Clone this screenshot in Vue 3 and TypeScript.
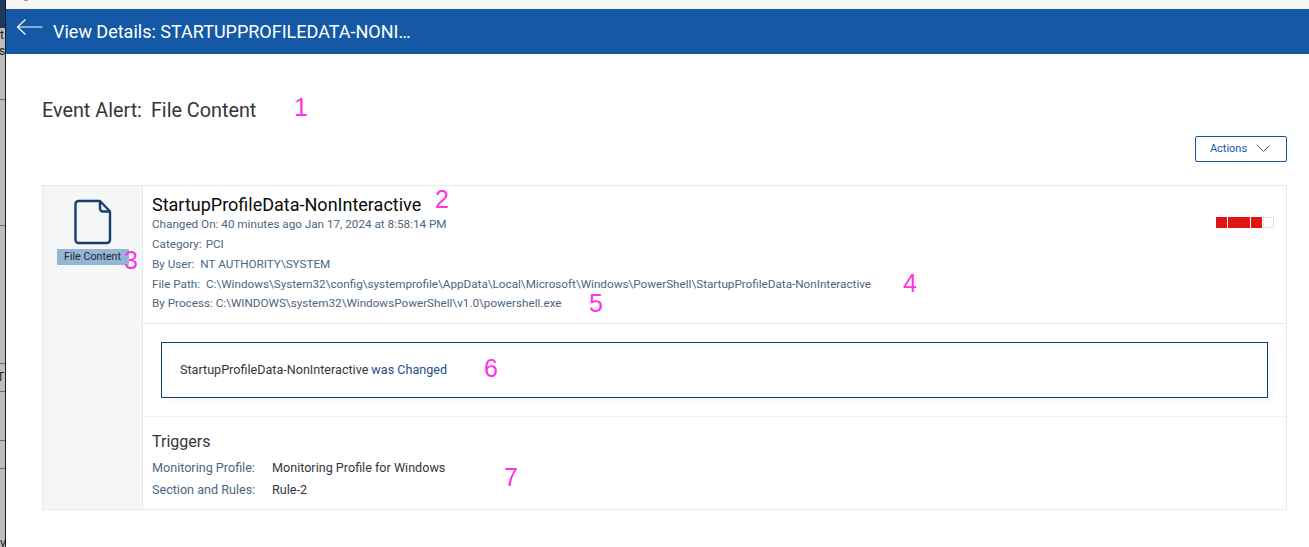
<script setup lang="ts">
interface Row { label: string; value: string; gap: number }
const meta: Row[] = [
  { label: 'Category:', value: 'PCI', gap: 4 },
  { label: 'By User:', value: 'NT AUTHORITY\\SYSTEM', gap: 6 },
  { label: 'File Path:', value: 'C:\\Windows\\System32\\config\\systemprofile\\AppData\\Local\\Microsoft\\Windows\\PowerShell\\StartupProfileData-NonInteractive', gap: 6 },
]
</script>

<template>
  <div class="page">
    <aside class="backdrop">
      <span class="bd-navy"></span>
      <span class="bd-line l1"></span>
      <span class="bd-text t1">t</span>
      <span class="bd-text t2">s</span>
      <span class="bd-line l2"></span>
      <span class="bd-line l3"></span>
      <span class="bd-text t3">T</span>
      <span class="bd-line l4"></span>
      <span class="bd-line l5"></span>
      <span class="bd-line l6"></span>
      <span class="bd-text t4">v</span>
    </aside>
    <main class="drawer">
      <div class="topstrip"><i class="red-mark"></i></div>
      <header class="bar">
        <svg class="back" width="28" height="18" viewBox="0 0 28 18" fill="none" stroke="#fff" stroke-width="1.2">
          <path d="M1.500 9H26.500M9.500 1.500 1.500 9 9.500 16.500" />
        </svg>
        <span class="bar-title">View Details: STARTUPPROFILEDATA-NONI…</span>
      </header>
      <div class="content">
        <h1 class="headline"><span>Event Alert:</span><span>File Content</span></h1>
        <div class="actions-row">
          <button class="actions" type="button">
            <span>Actions</span>
            <svg width="13" height="7" viewBox="0 0 13 7" fill="none" stroke="#1558a5" stroke-width="1">
              <path d="M.5.5 6.500 6.500 12.500.5" />
            </svg>
          </button>
        </div>
        <section class="card">
          <div class="side">
            <svg class="file" width="38" height="46" viewBox="0 0 38 46" fill="none" stroke="#173f6e" stroke-width="2.4" stroke-linejoin="round">
              <path d="M4.500 2H26L36 12.500V41A3 3 0 0 1 33 44H4.500A3 3 0 0 1 1.500 41V5A3 3 0 0 1 4.500 2Z" />
              <path d="M26 2V9.500A3 3 0 0 0 29 12.500H36" />
            </svg>
            <span class="tag">File Content</span>
          </div>
          <div class="body">
            <div class="summary">
              <div class="summary-text">
                <h2 class="name">StartupProfileData-NonInteractive</h2>
                <p class="line first">Changed On: 40 minutes ago Jan 17, 2024 at 8:58:14 PM</p>
                <p v-for="r in meta" :key="r.label" class="line"><span :style="{ marginRight: r.gap + 'px' }">{{ r.label }}</span>{{ r.value }}</p>
                <p class="line process">By Process: C:\WINDOWS\system32\WindowsPowerShell\v1.0\powershell.exe</p>
              </div>
              <div class="severity">
                <i class="w11"></i><i class="w22"></i><i class="w11"></i><i class="empty"></i>
              </div>
            </div>
            <div class="message-wrap">
              <div class="message">
                <span class="dark">StartupProfileData-NonInteractive</span> <span class="blue">was Changed</span>
              </div>
            </div>
            <div class="triggers">
              <h3 class="trig-title">Triggers</h3>
              <div class="trig-row"><span class="trig-lab">Monitoring Profile:</span><span>Monitoring Profile for Windows</span></div>
              <div class="trig-row"><span class="trig-lab">Section and Rules:</span><span>Rule-2</span></div>
            </div>
          </div>
        </section>
      </div>
    </main>
    <span class="note n1">1</span>
    <span class="note n2">2</span>
    <span class="note n3">3</span>
    <span class="note n4">4</span>
    <span class="note n5">5</span>
    <span class="note n6">6</span>
    <span class="note n7">7</span>
  </div>
</template>

<style>
html, body { margin: 0; background: #fff; overflow: hidden; }
</style>

<style scoped>
.page { position: relative; width: 1309px; height: 547px; display: flex; overflow: hidden; font-family: Roboto, "Liberation Sans", sans-serif; }
.backdrop { position: relative; width: 5px; flex: none; background: #bdbdbd; }
.bd-navy { position: absolute; left: 0; top: 0; width: 5px; height: 28px; background: #1d3a63; }
.bd-line { position: absolute; left: 0; width: 5px; height: 1px; background: #5d7187; }
.l1 { top: 99px; } .l2 { top: 225px; } .l3 { top: 363px; } .l4 { top: 391px; } .l5 { top: 440px; } .l6 { top: 468px; }
.bd-text { position: absolute; font-size: 12px; color: #222; line-height: 12px; }
.t1 { top: 29px; left: 0; } .t2 { top: 45px; left: -1px; } .t3 { top: 371px; left: -3px; } .t4 { top: 537px; left: 0; }
.drawer { flex: 1; min-width: 0; display: flex; flex-direction: column; background: #fff; border-left: 1px solid #17191c; }
.topstrip { height: 9px; background: #f5f5f5; position: relative; }
.red-mark { position: absolute; left: 18px; top: 0; width: 4px; height: 1px; background: #f08080; }
.bar { height: 45px; background: #1558a5; color: #fff; display: flex; align-items: center; box-sizing: border-box; padding: 0 0 0 10px; }
.back { margin-top: -9px; flex: none; }
.bar-title { margin-left: 9px; font-size: 18px; font-weight: 400; letter-spacing: 0; }
.content { padding: 0 22px 0 36px; }
.headline { margin: 45px 0 0; font-size: 19.800px; font-weight: 400; line-height: 23px; color: #33373b; display: flex; gap: 9px; }
.actions-row { display: flex; justify-content: flex-end; margin-top: 14px; }
.actions { width: 92px; height: 26px; box-sizing: border-box; background: #fff; border: 1px solid #1558a5; border-radius: 2px; color: #1558a5; font: 400 11px Roboto, sans-serif; display: flex; align-items: center; justify-content: center; gap: 10px; padding: 0 2px 2px 0; }
.card { margin-top: 23px; height: 325px; box-sizing: border-box; border: 1px solid #e6e8ea; display: flex; }
.side { width: 99px; flex: none; background: #f4f6f8; border-right: 1px solid #e6e8ea; display: flex; flex-direction: column; align-items: center; position: relative; }
.file { margin-top: 13px; }
.tag { margin-top: 4px; width: 72px; height: 16px; background: #94b4d8; border-radius: 1px; color: #22272c; font-size: 10.700px; line-height: 15px; text-align: center; }
.body { flex: 1; min-width: 0; display: flex; flex-direction: column; }
.summary { height: 138px; box-sizing: border-box; border-bottom: 1px solid #e6e8ea; padding: 7px 12px 0 9px; display: flex; justify-content: space-between; }
.name { margin: 0 0 -1px; font-size: 18px; font-weight: 400; line-height: 24px; color: #0b0b0b; }
.line { margin: 0; font-size: 11.700px; line-height: 20px; color: #4b677f; white-space: nowrap; }
.line.first { line-height: 16px; margin-bottom: 2px; }
.line.process { margin-top: -1px; }
.severity { display: flex; gap: 1px; margin-top: 24px; height: 11px; }
.severity i { display: block; height: 11px; background: #e01414; }
.severity .w11 { width: 11px; }
.severity .w22 { width: 22px; }
.severity .empty { width: 11px; box-sizing: border-box; background: #fff; border: 1px solid #dfe1e3; }
.message-wrap { height: 93px; box-sizing: border-box; padding: 18px 18px 0; border-bottom: 1px solid #eef0f1; }
.message { height: 56px; box-sizing: border-box; border: 1px solid #173f6e; padding: 0 18px 2px; display: flex; align-items: center; gap: 3px; font-size: 12.600px; box-shadow: 4px 4px 6px rgba(0,0,0,.03); }
.dark { color: #33373b; }
.blue { color: #1c4f88; }
.triggers { padding: 15px 9px 0; }
.trig-title { margin: 0; font-size: 16px; font-weight: 400; line-height: 20px; color: #33373b; }
.trig-row { display: flex; font-size: 12.600px; line-height: 21px; color: #33373b; }
.trig-row:first-of-type { margin-top: 5px; }
.trig-row + .trig-row { margin-top: 1px; }
.trig-lab { width: 120px; color: #4b677f; }
.note { position: absolute; color: #ff33e6; font-family: "Liberation Sans", sans-serif; font-size: 25px; line-height: 20px; }
.n1 { left: 294px; top: 97px; } .n2 { left: 435px; top: 189px; } .n3 { left: 124px; top: 250px; }
.n4 { left: 903px; top: 273px; } .n5 { left: 589px; top: 293px; } .n6 { left: 484px; top: 358px; } .n7 { left: 504px; top: 467px; }
</style>
